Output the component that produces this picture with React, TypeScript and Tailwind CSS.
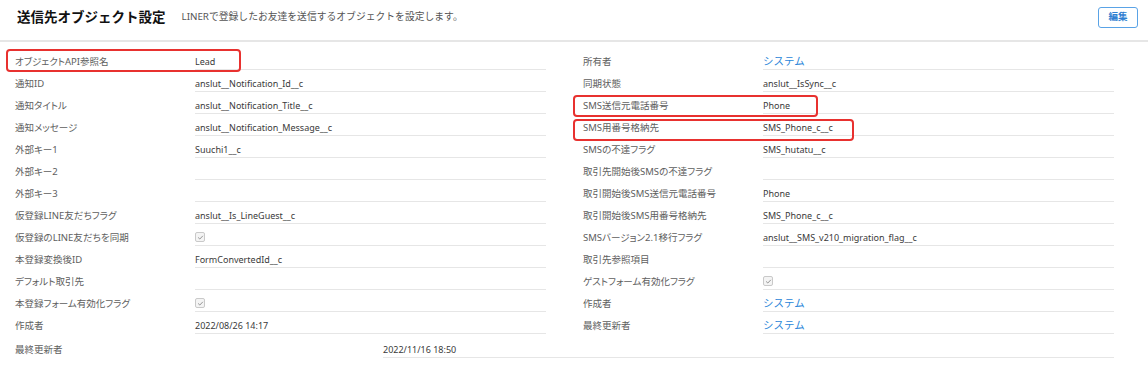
import React from "react";

type Cell = string | { kind: "check" } | { kind: "link"; text: string };

const check: Cell = { kind: "check" };
const sys: Cell = { kind: "link", text: "システム" };

const leftRows: [string, Cell][] = [
  ["オブジェクトAPI参照名", "Lead"],
  ["通知ID", "anslut__Notification_Id__c"],
  ["通知タイトル", "anslut__Notification_Title__c"],
  ["通知メッセージ", "anslut__Notification_Message__c"],
  ["外部キー1", "Suuchi1__c"],
  ["外部キー2", ""],
  ["外部キー3", ""],
  ["仮登録LINE友だちフラグ", "anslut__Is_LineGuest__c"],
  ["仮登録のLINE友だちを同期", check],
  ["本登録変換後ID", "FormConvertedId__c"],
  ["デフォルト取引先", ""],
  ["本登録フォーム有効化フラグ", check],
  ["作成者", "2022/08/26 14:17"],
];

const rightRows: [string, Cell][] = [
  ["所有者", sys],
  ["同期状態", "anslut__IsSync__c"],
  ["SMS送信元電話番号", "Phone"],
  ["SMS用番号格納先", "SMS_Phone_c__c"],
  ["SMSの不達フラグ", "SMS_hutatu__c"],
  ["取引先開始後SMSの不達フラグ", ""],
  ["取引開始後SMS送信元電話番号", "Phone"],
  ["取引開始後SMS用番号格納先", "SMS_Phone_c__c"],
  ["SMSバージョン2.1移行フラグ", "anslut__SMS_v210_migration_flag__c"],
  ["取引先参照項目", ""],
  ["ゲストフォーム有効化フラグ", check],
  ["作成者", sys],
  ["最終更新者", sys],
];

function CheckBox() {
  return (
    <span className="mt-[1px] flex h-[10px] w-[10px] items-center justify-center rounded-[2px] border border-[#c9c9c9] bg-[#f4f4f4]">
      <svg viewBox="0 0 10 10" className="h-[7px] w-[7px]" fill="none" stroke="#8a8a8a" strokeWidth={1.3}>
        <path d="M2 5.3l2 1.9L8 3" strokeLinecap="round" strokeLinejoin="round" />
      </svg>
    </span>
  );
}

function Value({ cell }: { cell: Cell }) {
  if (typeof cell === "string") return <span>{cell}</span>;
  if (cell.kind === "check") return <CheckBox />;
  return <span className="text-[10.5px] text-[#2b86d9]">{cell.text}</span>;
}

// labels use proportional kana, like the narrow UI font in the picture
const labelCls = "shrink-0 text-[9.5px] leading-[13px] text-[#5e5e5e] [font-feature-settings:'palt']";
const valueCls = "text-[9px] leading-[13px] text-[#3a3a3a]";

function Row({ label, cell }: { label: string; cell: Cell }) {
  return (
    <div className="flex h-[22px] items-start pt-[5px]">
      <div className={`w-[180px] ${labelCls}`}>{label}</div>
      <div className={`flex h-[15px] flex-1 items-start border-b border-[#e6e6e6] ${valueCls}`}>
        <Value cell={cell} />
      </div>
    </div>
  );
}

export default function App() {
  return (
    <main
      className="relative h-[368px] w-[1148px] overflow-hidden bg-white"
      style={{ fontFamily: '"Noto Sans", "Noto Sans CJK JP", sans-serif' }}
    >
      <header className="flex h-[42px] items-center border-b-2 border-[#e6e6e6] pb-[5px] pl-[17px] pr-[10px]">
        <h1 className="text-[13.5px] font-bold text-[#111]">送信先オブジェクト設定</h1>
        <p className="ml-[16px] text-[9.8px] text-[#555]">LINERで登録したお友達を送信するオブジェクトを設定します。</p>
        <button className="ml-auto h-[21px] w-[40px] rounded-[3px] border border-[#5aa3e6] text-[9.5px] font-semibold text-[#2f80d1]">
          編集
        </button>
      </header>

      <section className="grid grid-cols-[531px_531px] gap-x-[37px] pl-[15px] pt-[8px]">
        <div>
          {leftRows.map(([l, c]) => (
            <Row key={l} label={l} cell={c} />
          ))}
        </div>
        <div>
          {rightRows.map(([l, c]) => (
            <Row key={l} label={l} cell={c} />
          ))}
        </div>
      </section>

      <div className="mt-[2px] flex h-[22px] items-start pl-[15px] pt-[5px]">
        <div className={`w-[368px] ${labelCls}`}>最終更新者</div>
        <div className={`h-[15px] w-[731px] border-b border-[#e6e6e6] ${valueCls}`}>2022/11/16 18:50</div>
      </div>

      {/* annotation boxes */}
      <div className="absolute left-[6px] top-[49px] h-[23px] w-[235px] rounded-[4px] border-2 border-[#e8312f]" />
      <div className="absolute left-[573px] top-[95px] h-[22px] w-[245px] rounded-[4px] border-2 border-[#e8312f]" />
      <div className="absolute left-[573px] top-[119px] h-[22px] w-[281px] rounded-[4px] border-2 border-[#e8312f]" />
    </main>
  );
}
